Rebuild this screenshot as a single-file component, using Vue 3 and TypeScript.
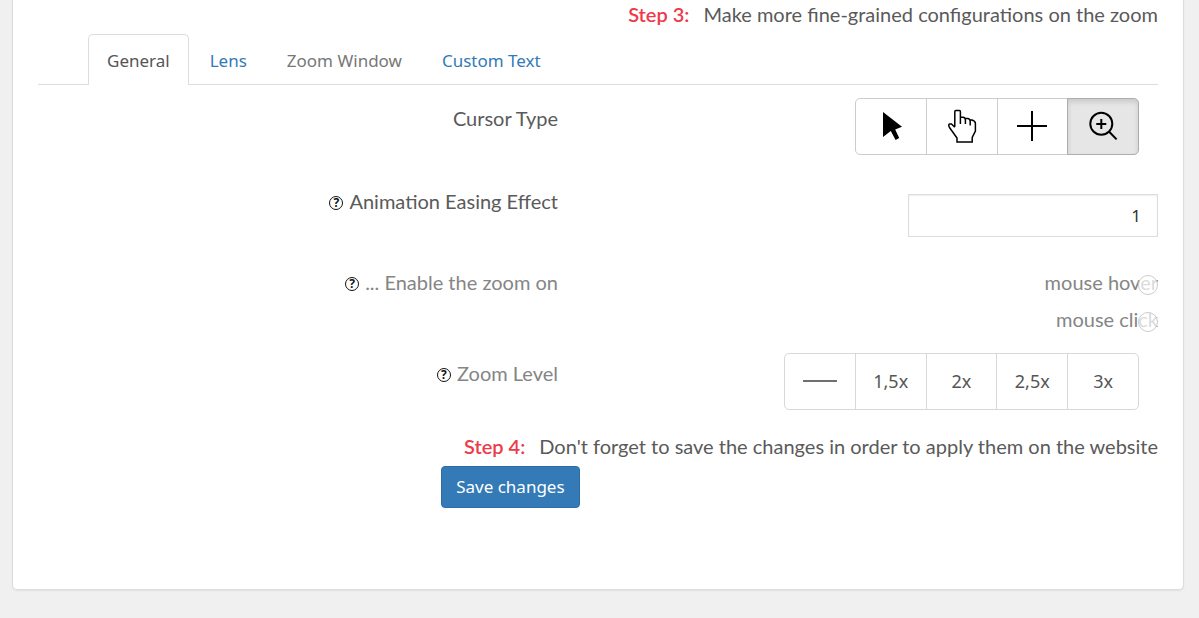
<script setup lang="ts">
import { ref } from 'vue'

type Cursor = 'default' | 'pointer' | 'crosshair' | 'zoom'

const tabs = [
  { label: 'General', muted: false },
  { label: 'Lens', muted: false },
  { label: 'Zoom Window', muted: true },
  { label: 'Custom Text', muted: false },
]
const activeTab = ref('General')

const cursors: { id: Cursor; label: string }[] = [
  { id: 'default', label: 'Default cursor' },
  { id: 'pointer', label: 'Pointer cursor' },
  { id: 'crosshair', label: 'Crosshair cursor' },
  { id: 'zoom', label: 'Zoom cursor' },
]
const cursor = ref<Cursor>('zoom')

const easing = ref('1')
const triggers = ['mouse hover', 'mouse click']
const trigger = ref('')
const levels = ['1,5x', '2x', '2,5x', '3x']
const level = ref('')
</script>

<template>
  <main class="panel">
    <p class="step"><strong>Step 3:</strong><span>Make more fine-grained configurations on the zoom</span></p>

    <nav class="tabs">
      <a
        v-for="tab in tabs"
        :key="tab.label"
        href="#"
        :class="{ active: tab.label === activeTab, muted: tab.muted }"
        @click.prevent="activeTab = tab.label"
      >{{ tab.label }}</a>
    </nav>

    <form @submit.prevent>
      <div class="row row-cursor">
        <div class="label">Cursor Type</div>
        <div class="group" role="group" aria-label="Cursor Type">
          <button
            v-for="c in cursors"
            :key="c.id"
            type="button"
            :aria-label="c.label"
            :class="{ pressed: cursor === c.id }"
            @click="cursor = c.id"
          >
            <svg viewBox="0 0 40 40" width="40" height="40" aria-hidden="true">
              <path v-if="c.id === 'default'" d="M12 6L31 20.7L24.2 23.5L28.2 32L24.6 34L19.8 25L12 31Z" />
              <path
                v-else-if="c.id === 'pointer'"
                class="line thin"
                d="M12.8 20.5V5.5Q12.8 4.6 13.8 4.6H17.4Q18.4 4.6 18.4 5.5V18M18.4 11.2H21Q23.4 11.5 23.4 14V18M23.4 12.5H26Q28.2 13 28.2 15.5V19.5M28.2 14H30Q33.4 15 33.4 17.5V25L30.2 31.5V36H15V32L7.5 21.5Q6 18.5 7.5 18H9.5L12.8 21.2"
              />
              <path v-else-if="c.id === 'crosshair'" class="line" d="M5 20H35M20 5V35" />
              <g v-else class="line">
                <circle cx="18.3" cy="17.7" r="11" />
                <path d="M13.3 18H23.3M18.3 13V23M26.2 25.8L33.6 33.4" />
              </g>
            </svg>
          </button>
        </div>
      </div>

      <div class="row row-easing">
        <label class="label" for="easing"><span class="help">?</span>Animation Easing Effect</label>
        <input id="easing" v-model="easing" class="field" type="text" />
      </div>

      <div class="row row-trigger light">
        <div class="label"><span class="help">?</span>... Enable the zoom on</div>
        <div class="choices">
          <label v-for="t in triggers" :key="t">
            {{ t }}<input v-model="trigger" type="radio" name="trigger" :value="t" />
          </label>
        </div>
      </div>

      <div class="row row-level light">
        <div class="label"><span class="help">?</span>Zoom Level</div>
        <div class="group levels" role="group" aria-label="Zoom Level">
          <button type="button" aria-label="No zoom level" @click="level = ''"><span class="dash"></span></button>
          <button
            v-for="l in levels"
            :key="l"
            type="button"
            :class="{ pressed: level === l }"
            @click="level = l"
          >{{ l }}</button>
        </div>
      </div>

      <p class="step"><strong>Step 4:</strong><span>Don't forget to save the changes in order to apply them on the website</span></p>
      <button class="save" type="submit">Save changes</button>
    </form>
  </main>
</template>

<style>
body {
  background: #f0f0f0;
}
</style>

<style scoped>
.panel {
  margin: 0 15px 28px 12px;
  padding: 0 25px 81px;
  border: 1px solid #dcdcdc;
  border-top: 0;
  border-radius: 0 0 5px 5px;
  background: #fff;
  box-shadow: 0 1px 2px rgba(0, 0, 0, 0.06);
  color: #5a5a5a;
  font: 20px/28px Lato, "Open Sans", sans-serif;
}
.step {
  display: flex;
  justify-content: flex-end;
  gap: 14px;
  margin: 0;
}
.step strong {
  color: #ee3a4a;
  font-weight: 600;
}
.tabs {
  display: flex;
  gap: 2px;
  margin-top: 6px;
  padding-left: 50px;
  border-bottom: 1px solid #ddd;
}
.tabs a {
  margin-bottom: -1px;
  padding: 12px 18px 10px;
  border: 1px solid transparent;
  border-bottom: 0;
  border-radius: 5px 5px 0 0;
  color: #337ab7;
  font-family: "Noto Sans", sans-serif;
  font-size: 17px;
  text-decoration: none;
}
.tabs a.muted {
  color: #777;
}
.tabs a.active {
  border-color: #ddd;
  background: #fff;
  color: #555;
}
.row {
  display: grid;
  grid-template-columns: 13fr 15fr;
  align-items: start;
  justify-items: end;
}
.light {
  color: #858585;
}
.row-cursor {
  margin-top: 13px;
}
.row-easing {
  margin-top: 32px;
}
.row-trigger {
  margin-top: 31px;
}
.row-level {
  margin: 20px 0 22px;
}
.label {
  display: flex;
  align-items: center;
  gap: 6px;
}
.row-cursor .label,
.row-level .label {
  padding-top: 6px;
}
.help {
  box-sizing: border-box;
  width: 14px;
  height: 14px;
  margin-top: 3px;
  border: 1px solid #111;
  border-radius: 50%;
  color: #111;
  font: bold 12px/12px "Noto Sans", sans-serif;
  text-align: center;
}
.group {
  display: flex;
  width: 284px;
  margin-right: 19px;
}
.group button {
  box-sizing: border-box;
  display: flex;
  flex: 1;
  align-items: center;
  justify-content: center;
  height: 57px;
  margin: 0 0 0 -1px;
  padding: 0 0 2px;
  border: 1px solid #ccc;
  background: #fff;
  color: #555;
  font: 18px/28px "Noto Sans", sans-serif;
}
.group button:first-child {
  margin-left: 0;
  border-radius: 5px 0 0 5px;
}
.group button:last-child {
  border-radius: 0 5px 5px 0;
}
.group button.pressed {
  position: relative;
  border-color: #adadad;
  background: #e6e6e6;
  box-shadow: inset 0 3px 5px rgba(0, 0, 0, 0.125);
}
.levels {
  width: 355px;
}
.levels button {
  border-color: #d8d8d8;
}
.dash {
  width: 34px;
  height: 2px;
  background: #707070;
}
.line {
  fill: none;
  stroke: #000;
  stroke-width: 2;
}
.thin {
  stroke-width: 1.5;
}
.field {
  box-sizing: border-box;
  width: 250px;
  height: 43px;
  margin: 7px 0 0;
  padding: 6px 16px;
  border: 1px solid #ddd;
  border-radius: 0;
  background: #fff;
  box-shadow: inset 0 1px 2px rgba(0, 0, 0, 0.07);
  color: #333;
  font: 17px/28px "Noto Sans", sans-serif;
  text-align: right;
}
.choices {
  display: grid;
  gap: 9px;
  justify-items: end;
}
.choices label {
  position: relative;
}
.choices input {
  position: absolute;
  top: 7px;
  right: 0;
  width: 20px;
  height: 20px;
  margin: 0;
  border: 1px solid #ccc;
  border-radius: 50%;
  background: rgba(255, 255, 255, 0.7);
  appearance: none;
}
.choices input:checked {
  box-shadow: inset 0 0 0 5px #fff;
  background: #337ab7;
}
.save {
  box-sizing: border-box;
  display: block;
  height: 42px;
  margin: 6px 0 0 36%;
  padding: 0 14px;
  border: 1px solid #2e6da4;
  border-radius: 4px;
  background: #337ab7;
  color: #fff;
  font: 17px/28px "Noto Sans", sans-serif;
}
</style>
